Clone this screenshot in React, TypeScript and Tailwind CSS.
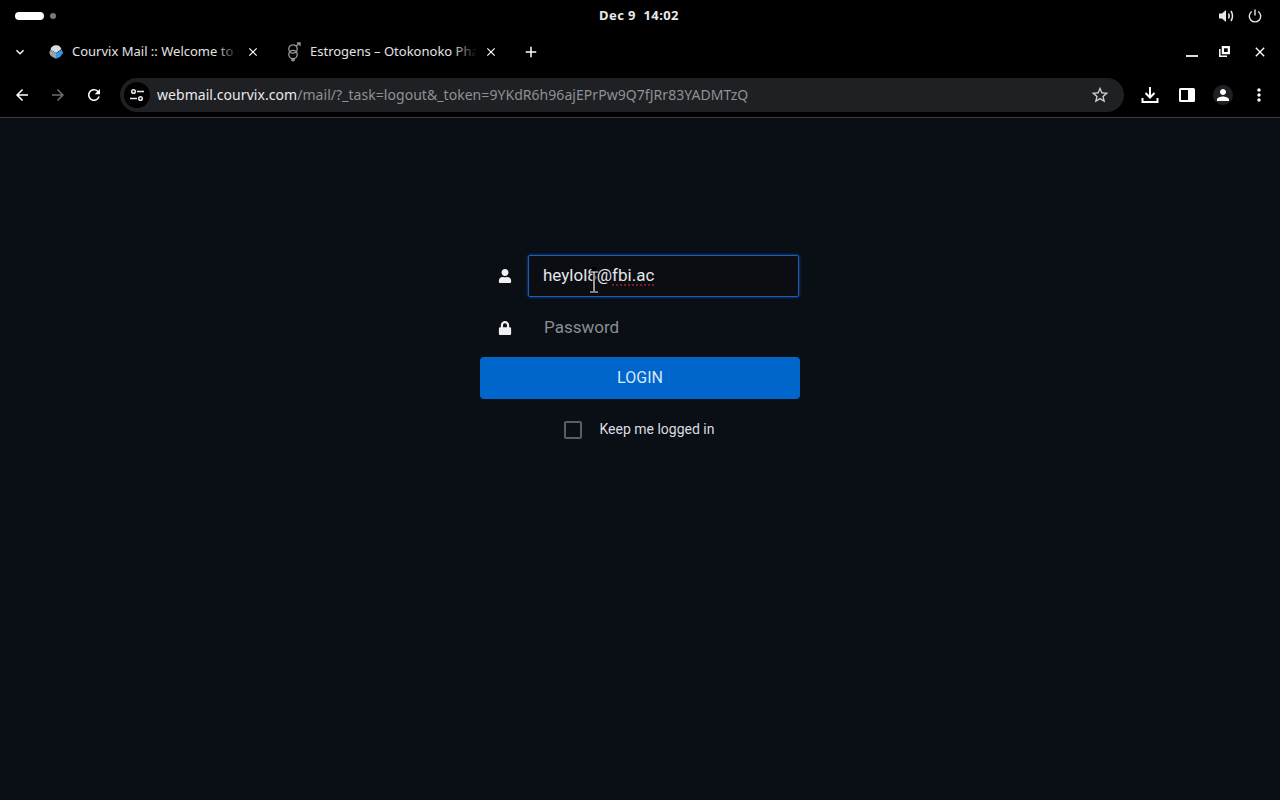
import { MdArrowBack, MdArrowForward, MdRefresh, MdStarBorder, MdMoreVert, MdPerson, MdClose, MdAdd, MdKeyboardArrowDown } from "react-icons/md";
import { FaUser, FaLock } from "react-icons/fa";

const chromeFont = "font-['Noto_Sans',sans-serif]";

const MailLogo = () => (
  <svg width="18" height="18" viewBox="0 0 18 18">
    <path d="M9 1.5 C12 1 14.5 3 15 6 L9 10 L3 6.5 C3 4 5.5 1.5 9 1.5z" fill="#d8dde2" />
    <path d="M1.5 9 L3 6.5 L9 10.5 L9 16.5 L4 14 C2.5 13 1.5 11 1.5 9z" fill="#9aa3ab" />
    <path d="M9 10.5 L15.5 6.5 L17 10 L13.5 14.5 L9 16.5z" fill="#2e9be6" />
  </svg>
);

const GenderLogo = () => (
  <svg width="16" height="20" viewBox="0 0 16 20" fill="none" stroke="#9a9a9a" strokeWidth="1.3">
    <circle cx="7" cy="7" r="4.2" />
    <circle cx="7" cy="12.5" r="4.2" />
    <path d="M10 4 L14 1 M11 1 H14 V4 M7 16.5 V19.5 M5 18 H9" />
  </svg>
);

const TuneIcon = () => (
  <svg width="14" height="14" viewBox="0 0 14 14" fill="none" stroke="#e8eaed" strokeWidth="1.5">
    <circle cx="3.5" cy="3.5" r="1.8" />
    <path d="M7 3.5 H14" />
    <circle cx="10.5" cy="10.5" r="1.8" />
    <path d="M0 10.5 H7" />
  </svg>
);

const DownloadIcon = () => (
  <svg width="18" height="18" viewBox="0 0 18 18" fill="none" stroke="#fff" strokeWidth="2">
    <path d="M9 1 V11 M4.5 7 L9 11.5 L13.5 7 M1.5 12 V16 H16.5 V12" />
  </svg>
);

const SidePanelIcon = () => (
  <svg width="16" height="14" viewBox="0 0 16 14">
    <path d="M1.5 0 H14.5 A1.5 1.5 0 0 1 16 1.5 V12.5 A1.5 1.5 0 0 1 14.5 14 H1.5 A1.5 1.5 0 0 1 0 12.5 V1.5 A1.5 1.5 0 0 1 1.5 0z M2 2 V12 H9 V2z" fill="#fff" fillRule="evenodd" />
  </svg>
);

const RestoreIcon = () => (
  <svg width="11" height="11" viewBox="0 0 11 11" fill="none" stroke="#fff" strokeWidth="1.5">
    <rect x="3.5" y="0.8" width="6.7" height="6.7" fill="#fff" />
    <rect x="5" y="2.3" width="3.7" height="3.7" fill="#000" stroke="none" />
    <path d="M0.8 3 V10.2 H8" />
  </svg>
);

const VolumeIcon = () => (
  <svg width="17" height="14" viewBox="0 0 17 14" fill="none">
    <path d="M0 4.5 H3 L7 1 V13 L3 9.5 H0z" fill="#e8e8e8" />
    <path d="M9.5 4.5 Q11 7 9.5 9.5 M12 2 Q15 7 12 12" stroke="#e8e8e8" strokeWidth="1.5" />
  </svg>
);

const PowerIcon = () => (
  <svg width="14" height="14" viewBox="0 0 14 14" fill="none" stroke="#e8e8e8" strokeWidth="1.4">
    <path d="M7 0.5 V6.5 M3.8 2.5 A5.7 5.7 0 1 0 10.2 2.5" />
  </svg>
);

const Tab = ({ icon, title, width }: { icon: React.ReactNode; title: string; width: string }) => (
  <div className={`flex items-center h-full ${width}`}>
    <div className="w-[16px] flex justify-center shrink-0">{icon}</div>
    <div className="relative ml-[8px] w-[167px] overflow-hidden whitespace-nowrap text-[13px] text-[#e3e3e3]">
      {title}
      <div className="absolute right-0 top-0 bottom-0 w-[24px] bg-linear-to-r from-transparent to-black" />
    </div>
    <MdClose className="ml-[7px] shrink-0 text-white" size={14} />
  </div>
);

export default function App() {
  return (
    <div className={`w-[1280px] h-[800px] flex flex-col bg-black overflow-hidden ${chromeFont}`}>
      <div className="h-[32px] flex items-center justify-between pl-[15px] pr-[18px] relative shrink-0">
        <div className="flex items-center gap-[6px]">
          <div className="w-[29px] h-[8px] rounded-full bg-white" />
          <div className="w-[6px] h-[6px] rounded-full bg-[#7a7a7a]" />
        </div>
        <div className="absolute left-0 right-0 top-0 h-full flex items-center justify-center text-[13px] font-bold text-[#e8e8e8] tracking-[0.4px] pr-[2px]">
          Dec 9&nbsp;&nbsp;14:02
        </div>
        <div className="flex items-center gap-[12px]">
          <VolumeIcon />
          <PowerIcon />
        </div>
      </div>

      <div className="h-[40px] flex items-center shrink-0 relative">
        <div className="w-[48px] flex items-center pl-[12px]">
          <MdKeyboardArrowDown className="text-white" size={16} />
        </div>
        <Tab icon={<MailLogo />} title="Courvix Mail :: Welcome to Courvix Mail" width="w-[238px]" />
        <Tab icon={<GenderLogo />} title="Estrogens – Otokonoko Pharmacy" width="w-[234px]" />
        <MdAdd className="text-white ml-[2px]" size={18} />
        <div className="ml-auto flex items-center pr-[12px]">
          <div className="w-[12px] h-[2px] bg-[#e0e0e0] mt-[7px] mr-[21px]" />
          <div className="mr-[22px] mb-[2px]"><RestoreIcon /></div>
          <MdClose className="text-white" size={16} />
        </div>
      </div>

      <div className="h-[46px] flex items-center shrink-0 border-b border-[#3a3d42]">
        <MdArrowBack className="ml-[13px] text-white" size={18} />
        <MdArrowForward className="ml-[18px] text-[#6e6e6e]" size={18} />
        <MdRefresh className="ml-[18px] text-white" size={18} />
        <div className="ml-[17px] w-[1004px] h-[34px] rounded-full bg-[#1f2023] flex items-center pl-[4px] pr-[14px]">
          <div className="w-[26px] h-[26px] rounded-full bg-black flex items-center justify-center shrink-0">
            <TuneIcon />
          </div>
          <div className="ml-[7px] text-[14px] tracking-[0.05px] whitespace-nowrap text-[#8e9196]">
            <span className="text-[#e8eaed]">webmail.courvix.com</span>/mail/?_task=logout&amp;_token=9YKdR6h96ajEPrPw9Q7fJRr83YADMTzQ
          </div>
          <MdStarBorder className="ml-auto text-[#d0d0d0]" size={20} />
        </div>
        <div className="ml-[17px]"><DownloadIcon /></div>
        <div className="ml-[20px]"><SidePanelIcon /></div>
        <div className="ml-[18px] w-[20px] h-[20px] rounded-full bg-[#1f2023] flex items-center justify-center">
          <MdPerson className="text-white" size={18} />
        </div>
        <MdMoreVert className="ml-[16px] text-white" size={20} />
      </div>

      <div className="flex-1 bg-[#0a0e15] flex flex-col items-center pt-[137px] font-['Roboto',sans-serif]">
        <div className="w-[320px] flex flex-col">
          <div className="flex items-center h-[42px]">
            <div className="w-[48px] pl-[18px]">
              <FaUser className="text-[#f0f0f0]" size={14} />
            </div>
            <div className="relative w-[271px] h-[42px] border border-[#1a5fb4] rounded-[2px] bg-[#0b0d13] shadow-[0_0_3px_#0d5cc0] flex items-center pl-[14px] text-[17px] text-[#e4e6e8]">
              <span>heylol8@<span className="underline decoration-dotted decoration-[#a0202a] underline-offset-[3px]">fbi.ac</span></span>
              <svg className="absolute left-[59px] top-[11px]" width="12" height="28" viewBox="0 0 12 28" fill="none">
                <path d="M2 5 H5 V1 H7 V5 H10 M6 5 V24 M2 25 H10" stroke="#000" strokeWidth="3" />
                <path d="M2 5 H10 M6 5 V24 M2 25 H10" stroke="#fff" strokeWidth="1.2" />
              </svg>
            </div>
          </div>
          <div className="flex items-center h-[42px] mt-[10px]">
            <div className="w-[48px] pl-[18px]">
              <FaLock className="text-[#f0f0f0]" size={14} />
            </div>
            <div className="pl-[16px] text-[17px] text-[#8b8e93]">Password</div>
          </div>
          <button className="mt-[8px] h-[42px] rounded-[4px] bg-[#0066cc] text-[#d8e8f8] text-[16px]">LOGIN</button>
          <div className="mt-[20px] flex items-center justify-center pr-[1px]">
            <div className="w-[18px] h-[18px] border-2 border-[#5a5d62] rounded-[2px]" />
            <span className="ml-[17px] text-[14px] text-[#dcdde0]">Keep me logged in</span>
          </div>
        </div>
      </div>
    </div>
  );
}
